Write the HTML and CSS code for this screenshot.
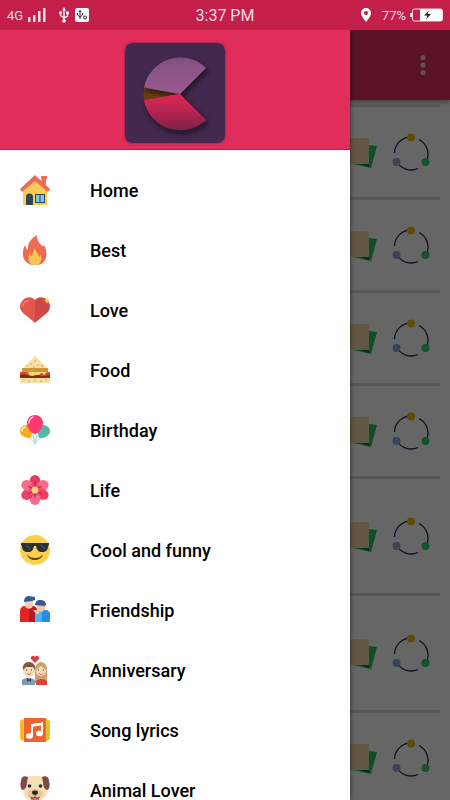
FILE: index.html
```
<!DOCTYPE html>
<html lang="en">
<head>
  <meta charset="UTF-8">
  <meta name="viewport" content="width=device-width, initial-scale=1.0">
  <title>Status</title>
  <link rel="stylesheet" href="styles.css">
</head>
<body>

  <!-- shared icons -->
  <svg class="sprite" aria-hidden="true">
    <symbol id="icon-copy" viewBox="0 0 40 40">
      <path d="M15 10l23 3-6 22-23-5z" fill="#22c75e"/>
      <path d="M21 31h9v3z" fill="#087a35"/>
      <path d="M3 5h27v26H3z" fill="#f5d9a6"/>
    </symbol>
    <symbol id="icon-share" viewBox="0 0 40 40">
      <g fill="none" stroke="#2c2a55" stroke-width="1.3">
        <path d="M3.500 20A16.500 16.500 0 0 1 20 4"/>
        <path d="M28 6.500A16.500 16.500 0 0 1 35.500 28"/>
        <path d="M5.500 28A16.500 16.500 0 0 0 27 35.500"/>
      </g>
      <circle cx="20" cy="4.500" r="4" fill="#f2bc0c"/>
      <circle cx="5.500" cy="29" r="4" fill="#98a2e0"/>
      <circle cx="34.500" cy="29" r="4" fill="#3ccb70"/>
    </symbol>
  </svg>

  <div class="status-bar">
    <div class="status-left">
      <span class="network">4G</span>
      <svg class="signal" viewBox="0 0 18 14"><path d="M0 9h2.500v5H0zM5 7h2.500v7H5zM10 3h2.500v11H10zM15 0h2.500v14H15z" fill="#fbdde6"/></svg>
      <svg class="usb" viewBox="0 0 10 16"><path d="M5 3v11M1.500 5v3.500L5 11l3.500-2V5" fill="none" stroke="#fff" stroke-width="1.4"/><path d="M5 0l2 3.500H3z" fill="#fff"/><circle cx="5" cy="14" r="1.800" fill="#fff"/><path d="M0 4.500h3v2.500H0zM7 4.500h3v2.500H7z" fill="#fff"/></svg>
      <svg class="debug" viewBox="0 0 14 14"><rect width="14" height="14" rx="2" fill="#fff"/><path d="M5 3v8M2.500 5v2L5 9l2.500-2V5" fill="none" stroke="#4a1b35" stroke-width="1"/><path d="M5 1.500l1.500 2.500h-3z" fill="#4a1b35"/><circle cx="10" cy="9.500" r="1.500" fill="none" stroke="#4a1b35"/></svg>
    </div>
    <span class="clock">3:37 PM</span>
    <div class="status-right">
      <svg class="pin" viewBox="0 0 10 14"><path d="M5 0a5 5 0 0 0-5 5c0 3.500 5 9 5 9s5-5.500 5-9a5 5 0 0 0-5-5z" fill="#fff"/><circle cx="5" cy="5" r="2" fill="#c41e4b"/></svg>
      <span class="percent">77%</span>
      <svg class="battery" viewBox="0 0 33 14"><path d="M0 5h2v4H0z" fill="#fbdde6"/><rect x="2.500" y="1" width="30" height="12" rx="2" fill="none" stroke="#fbdde6"/><path d="M10 1h22v12H10z" fill="#fff"/><path d="M19 2.500l-5 5h3.500l-1.500 4 5-5.500h-3.500z" fill="#222"/></svg>
    </div>
  </div>

  <div class="app">
    <main class="feed">
      <header class="toolbar">
        <button class="btn-more" aria-label="More options">
          <svg viewBox="0 0 6 22"><g fill="#e8cdd5"><circle cx="3" cy="3.500" r="2.600"/><circle cx="3" cy="11" r="2.600"/><circle cx="3" cy="18.500" r="2.600"/></g></svg>
        </button>
      </header>
      <div class="feed-list">
        <div class="feed-row">
          <button aria-label="Copy"><svg><use href="#icon-copy"/></svg></button>
          <button aria-label="Share"><svg><use href="#icon-share"/></svg></button>
        </div>
        <div class="feed-row">
          <button aria-label="Copy"><svg><use href="#icon-copy"/></svg></button>
          <button aria-label="Share"><svg><use href="#icon-share"/></svg></button>
        </div>
        <div class="feed-row">
          <button aria-label="Copy"><svg><use href="#icon-copy"/></svg></button>
          <button aria-label="Share"><svg><use href="#icon-share"/></svg></button>
        </div>
        <div class="feed-row">
          <button aria-label="Copy"><svg><use href="#icon-copy"/></svg></button>
          <button aria-label="Share"><svg><use href="#icon-share"/></svg></button>
        </div>
        <div class="feed-row tall">
          <button aria-label="Copy"><svg><use href="#icon-copy"/></svg></button>
          <button aria-label="Share"><svg><use href="#icon-share"/></svg></button>
        </div>
        <div class="feed-row tall">
          <button aria-label="Copy"><svg><use href="#icon-copy"/></svg></button>
          <button aria-label="Share"><svg><use href="#icon-share"/></svg></button>
        </div>
        <div class="feed-row">
          <button aria-label="Copy"><svg><use href="#icon-copy"/></svg></button>
          <button aria-label="Share"><svg><use href="#icon-share"/></svg></button>
        </div>
      </div>
    </main>

    <div class="scrim"></div>

    <aside class="drawer">
      <div class="drawer-header">
        <svg class="logo" viewBox="0 0 100 100">
          <defs>
            <linearGradient id="purple" x1="0" y1="0" x2="0" y2="1"><stop offset="0" stop-color="#835080"/><stop offset="1" stop-color="#9c5a92"/></linearGradient>
            <linearGradient id="red" x1="0" y1="0" x2="0" y2="1"><stop offset="0" stop-color="#dc2856"/><stop offset="0.4" stop-color="#c02552"/><stop offset="1" stop-color="#7c2048"/></linearGradient>
            <filter id="soft" x="-20%" y="-20%" width="150%" height="150%"><feDropShadow dx="2" dy="3" stdDeviation="2.500" flood-color="#100818" flood-opacity="0.8"/></filter>
          </defs>
          <rect width="100" height="100" rx="7" fill="#43294d"/>
          <path d="M55 51L19 45a37 37 0 0 0 0 13z" fill="#6b3d0a"/>
          <g filter="url(#soft)">
            <path d="M55 51L19 44.500A37 37 0 0 1 81 25z" fill="url(#purple)"/>
            <path d="M55 51l26 26A37 37 0 0 1 19 57z" fill="url(#red)"/>
          </g>
        </svg>
      </div>

      <nav class="menu">
        <a href="#home" class="menu-item">
          <svg viewBox="0 0 30 30">
            <path d="M21 1h6v3h-1v8h-4z" fill="#ee6a55"/>
            <path d="M15 3L3 14v16h24V14z" fill="#fbc957"/>
            <path d="M15 0L0 14l2 3L15 6l13 11 2-3z" fill="#ee6a55"/>
            <path d="M6 30V22a3.500 3.500 0 0 1 7 0v8z" fill="#2f4657"/>
            <path d="M15 19h10v9H15z" fill="#2f4657"/>
            <path d="M16 20h3.500v7H16zM20.500 20H24v7h-3.500z" fill="#77c9ee"/>
          </svg>
          <span>Home</span>
        </a>
        <a href="#best" class="menu-item">
          <svg viewBox="0 0 30 30">
            <path d="M17 0c-1 4 2 8 5 11q1 1 2-1c3 5 3 12 1 15-2 4-5 5-10 5S6 28 4 24c-2-4-1-10 1-14 1 3 1 4 3 5C7 8 12 3 17 0z" fill="#ec6b52"/>
            <path d="M15 13c0 4 4 5 4 9 1 0 1-2 1-3 3 5 1 11-5 11S7 24 10 18c0 2 1 3 2 3 0-3 2-5 3-8z" fill="#fcc652"/>
          </svg>
          <span>Best</span>
        </a>
        <a href="#love" class="menu-item">
          <svg viewBox="0 0 30 30">
            <path d="M15 5C11 1 6 2 3 5c-4 4-4 9 0 13l11 9q1 1 1 1z" fill="#e2554d"/>
            <path d="M15 5c4-4 9-3 12 0 4 4 4 9 0 13l-11 9q-1 1-1 1z" fill="#cc4944"/>
            <path d="M3 11c0-3 2-5 5-5" fill="none" stroke="#ef8178" stroke-width="1.500" stroke-linecap="round"/>
            <path d="M27 2l1 2.500 2 1-2 1L27 9l-1-2.500-2-1 2-1z" fill="#fccb55"/>
          </svg>
          <span>Love</span>
        </a>
        <a href="#food" class="menu-item">
          <svg viewBox="0 0 30 30">
            <path d="M15 1L2 14h26z" fill="#f8dfa3"/>
            <path d="M2 13h26v4H2z" fill="#c9963b"/>
            <path d="M0 17h30v4H0z" fill="#df4930"/>
            <path d="M8 17h14l-3 3h-3l-3 2-4-2zM21 17h6l-3 3z" fill="#fbd46a"/>
            <path d="M0 20l4-1 3 1 5 1 5-1 5 1 8-1v4H0z" fill="#7c2f1b"/>
            <path d="M0 23h30v5H0z" fill="#f8dfa3"/>
            <g fill="#d88858"><circle cx="15" cy="6" r=".7"/><circle cx="11" cy="9" r=".7"/><circle cx="18" cy="10" r=".7"/><circle cx="7" cy="11" r=".7"/><circle cx="22" cy="11" r=".7"/><circle cx="14" cy="12" r=".7"/><circle cx="4" cy="25" r=".7"/><circle cx="9" cy="26" r=".7"/><circle cx="15" cy="25" r=".7"/><circle cx="21" cy="26" r=".7"/><circle cx="26" cy="25" r=".7"/></g>
          </svg>
          <span>Food</span>
        </a>
        <a href="#birthday" class="menu-item">
          <svg viewBox="0 0 30 30">
            <path d="M8 22l7 6 7-6M15 18v12" fill="none" stroke="#a7d9da"/>
            <path d="M7 10c-4 0-7 3-7 6 0 4 4 7 9 7 3 0 5-3 5-6 0-4-3-7-7-7z" fill="#faaa1e"/>
            <path d="M23 10c4 0 7 3 7 6 0 4-4 7-9 7-3 0-5-3-5-6 0-4 3-7 7-7z" fill="#55b6ac"/>
            <path d="M12 18h6l1 6-4 5-4-5z" fill="#e5f3f5"/>
            <path d="M13 20l2 9 2-9" fill="none" stroke="#83cbd1" stroke-width=".7"/>
            <path d="M15 0c5 0 8 4 8 8 0 5-4 10-8 11-4-1-8-6-8-11 0-4 3-8 8-8z" fill="#fb3a74"/>
            <path d="M9 8c0-3 2-5 4-6M2 16c0-2 1-3 3-4" fill="none" stroke="#fff" stroke-width="1.200" stroke-linecap="round"/>
          </svg>
          <span>Birthday</span>
        </a>
        <a href="#life" class="menu-item">
          <svg viewBox="0 0 30 30">
            <ellipse cx="15" cy="6" rx="5.300" ry="6" fill="#e93764"/>
            <ellipse cx="15" cy="6" rx="5.300" ry="6" fill="#f86a8c" transform="rotate(60 15 15)"/>
            <ellipse cx="15" cy="6" rx="5.300" ry="6" fill="#f13e67" transform="rotate(120 15 15)"/>
            <ellipse cx="15" cy="6" rx="5.300" ry="6" fill="#f86a8c" transform="rotate(180 15 15)"/>
            <ellipse cx="15" cy="6" rx="5.300" ry="6" fill="#f13e67" transform="rotate(240 15 15)"/>
            <ellipse cx="15" cy="6" rx="5.300" ry="6" fill="#f86a8c" transform="rotate(300 15 15)"/>
            <circle cx="15" cy="15" r="6" fill="#ee4a70"/>
            <path d="M15 7v16M8 11l14 8M8 19l14-8" stroke="#b31f4b" stroke-width="1"/>
            <circle cx="15" cy="15" r="3.500" fill="#fcd277"/>
          </svg>
          <span>Life</span>
        </a>
        <a href="#cool" class="menu-item">
          <svg viewBox="0 0 30 30">
            <circle cx="15" cy="15" r="15" fill="#fbd04e"/>
            <path d="M1 8h28v2l-1 1c0 4-2 6-6 6s-5-2-6-6h-2c-1 4-2 6-6 6s-6-2-6-6l-1-1z" fill="#292f36"/>
            <path d="M6 10l4 4M21 10l4 4" stroke="#454d56" stroke-width="1.500"/>
            <path d="M7 19c2 3 5 4 8 4s6-1 8-4c-1 4-4 6-8 6s-7-2-8-6z" fill="#6b421f"/>
          </svg>
          <span>Cool and funny</span>
        </a>
        <a href="#friendship" class="menu-item">
          <svg viewBox="0 0 30 30">
            <path d="M0 27V16c0-3 2-5 5-5h7c3 0 5 2 5 5v11z" fill="#e5251f"/>
            <path d="M9 11h3c3 0 5 2 5 5v11H9z" fill="#b91822"/>
            <path d="M5 5h8v5c0 5-8 5-8 0z" fill="#f3cfaf"/>
            <path d="M4 7c0-4 2-6 5-6l6 1v3l-3 1z" fill="#345a91"/>
            <path d="M15 27V20c0-3 2-5 5-5h5c3 0 5 2 5 5v7z" fill="#43b5f5"/>
            <path d="M22 15h3c3 0 5 2 5 5v7h-8z" fill="#258de0"/>
            <path d="M17 10h8v3c0 5-8 5-8 0z" fill="#efc9a8"/>
            <path d="M15 10c0-3 2-5 5-5s6 1 6 5l-2 1z" fill="#345a91"/>
            <path d="M13 15h6v4h-3z" fill="#e4c7b0"/>
          </svg>
          <span>Friendship</span>
        </a>
        <a href="#anniversary" class="menu-item">
          <svg viewBox="0 0 30 30">
            <path d="M15 8l-4-4c-1-2 2-5 4-2 2-3 5 0 4 2z" fill="#df3c3d"/>
            <path d="M15 28V14c0-4 3-7 6-7s6 3 6 7v14z" fill="#cda174"/>
            <path d="M2 30v-4c0-2 3-3 6-3s7 1 7 3v4z" fill="#8099b3"/>
            <path d="M16 30v-3c0-2 3-3 5-3s6 1 6 3v3z" fill="#dc3f35"/>
            <circle cx="9" cy="16" r="6" fill="#fadbb7"/>
            <circle cx="21" cy="16" r="5" fill="#fadbb7"/>
            <path d="M3 15c-1-5 2-8 6-8s7 3 6 8l-2-3H6z" fill="#82563a"/>
            <path d="M16 15c0-5 3-6 5-6s5 2 5 6l-5-4z" fill="#cda174"/>
            <path d="M7 18c1 2 3 2 4 0M19 18c1 2 3 2 4 0" fill="none" stroke="#9d5a42" stroke-width=".8"/>
            <path d="M6 15h1M11 15h1M18 15h1M23 15h1" stroke="#49342c"/>
            <path d="M7 23l2 1.500 2-1.500v4l-2-1.500L7 27z" fill="#35465b"/>
          </svg>
          <span>Anniversary</span>
        </a>
        <a href="#lyrics" class="menu-item">
          <svg viewBox="0 0 30 30">
            <path d="M0 6l4-2h22l4 2v18l-4 2H4l-4-2z" fill="#fcc72e"/>
            <path d="M2 5v20M28 5v20" stroke="#e9a51c"/>
            <path d="M4 3h22v24H4z" fill="#ee6332"/>
            <path d="M12 9l10-2v3l-10 2zM11 9h2v12h-2zM21 7h2v11h-2z" fill="#fff"/>
            <ellipse cx="9.500" cy="21" rx="3.500" ry="2.800" fill="#fff"/>
            <ellipse cx="19.500" cy="18.500" rx="3.500" ry="2.800" fill="#fff"/>
          </svg>
          <span>Song lyrics</span>
        </a>
        <a href="#animals" class="menu-item">
          <svg viewBox="0 0 30 30">
            <path d="M6 3c3-3 15-3 18 0l3 13c0 6-5 10-12 10S3 22 3 16z" fill="#f5dfb5"/>
            <path d="M8 2C4 0 1 2 1 6c-1 3-1 6 1 9 4 0 5-5 5-8z" fill="#7c4b41"/>
            <path d="M22 2c4-2 7 0 7 4 1 3 1 6-1 9-4 0-5-5-5-8z" fill="#7c4b41"/>
            <path d="M15 14c-6 0-9 4-7 7 2 3 12 3 14 0 2-3-1-7-7-7z" fill="#e7c798"/>
            <circle cx="9.500" cy="11" r="1.800" fill="#302b2b"/>
            <circle cx="20.500" cy="11" r="1.800" fill="#302b2b"/>
            <path d="M12 17c0-2 6-2 6 0s-1 3-3 3-3-1-3-3z" fill="#302b2b"/>
            <path d="M11 22h8v3c0 4-8 4-8 0z" fill="#e9686c"/>
            <path d="M15 20v2c-2 2-4 1-5 0M15 22c2 2 4 1 5 0" fill="none" stroke="#5b463a" stroke-width=".8"/>
          </svg>
          <span>Animal Lover</span>
        </a>
      </nav>
    </aside>
  </div>

</body>
</html>
```
FILE: styles.css
```
* {
  box-sizing: border-box;
  margin: 0;
  padding: 0;
}

body {
  display: flex;
  flex-direction: column;
  height: 100vh;
  overflow: hidden;
  font-family: Roboto, sans-serif;
  background-color: #fff;
}

button {
  border: none;
  background: none;
  cursor: pointer;
}

svg {
  display: block;
}

.sprite {
  position: absolute;
  width: 0;
  height: 0;
}

/* status bar */
.status-bar {
  display: grid;
  grid-template-columns: 1fr auto 1fr;
  align-items: center;
  flex-shrink: 0;
  height: 30px;
  padding: 0 7px;
  background-color: #c41e4b;
  color: #fbdde6;
}

.status-left,
.status-right {
  display: flex;
  align-items: center;
}

.status-right {
  justify-content: flex-end;
}

.network {
  font-size: 13px;
}

.signal {
  width: 18px;
  height: 14px;
  margin-left: 5px;
}

.usb {
  width: 10px;
  height: 16px;
  margin-left: 13px;
}

.debug {
  width: 14px;
  height: 14px;
  margin-left: 6px;
}

.clock {
  font-size: 16px;
}

.pin {
  width: 10px;
  height: 14px;
  margin-right: 11px;
}

.percent {
  font-size: 13px;
}

.battery {
  width: 33px;
  height: 14px;
  margin-left: 4px;
}

/* page behind the drawer */
.app {
  position: relative;
  flex: 1;
  min-height: 0;
  overflow: hidden;
}

.toolbar {
  display: flex;
  align-items: center;
  justify-content: flex-end;
  height: 70px;
  padding: 0 20px;
  background-color: #e02d5b;
  box-shadow: 0 2px 5px rgba(0, 0, 0, 0.4);
}

.btn-more {
  padding: 4px;
}

.btn-more svg {
  width: 6px;
  height: 22px;
}

.feed-list {
  padding: 4px 10px 0;
}

.feed-row {
  display: flex;
  justify-content: flex-end;
  gap: 12px;
  padding: 26px 9px 24px 0;
  border-top: 3px solid #dadada;
}

.feed-row.tall {
  padding-top: 38px;
  padding-bottom: 36px;
}

.feed-row svg {
  width: 40px;
  height: 40px;
}

.scrim {
  position: absolute;
  inset: 0;
  background-color: rgba(0, 0, 0, 0.6);
}

/* drawer */
.drawer {
  position: absolute;
  top: 0;
  left: 0;
  bottom: 0;
  width: 78%;
  max-width: 350px;
  overflow: hidden;
  background-color: #fff;
  box-shadow: 0 0 5px rgba(0, 0, 0, 0.6);
}

.drawer-header {
  display: flex;
  justify-content: center;
  padding: 13px 0 6px;
  background-color: #e02d5b;
  border-bottom: 1px solid #b02048;
}

.logo {
  width: 100px;
  height: 100px;
  border-radius: 7px;
  box-shadow: 0 0 3px rgba(67, 41, 77, 0.8);
}

.menu {
  padding-top: 10px;
}

.menu-item {
  display: flex;
  align-items: center;
  gap: 40px;
  height: 60px;
  padding: 0 20px;
  color: #000;
  font-size: 18px;
  font-weight: 500;
  text-decoration: none;
}

.menu-item svg {
  width: 30px;
  height: 30px;
}
```
